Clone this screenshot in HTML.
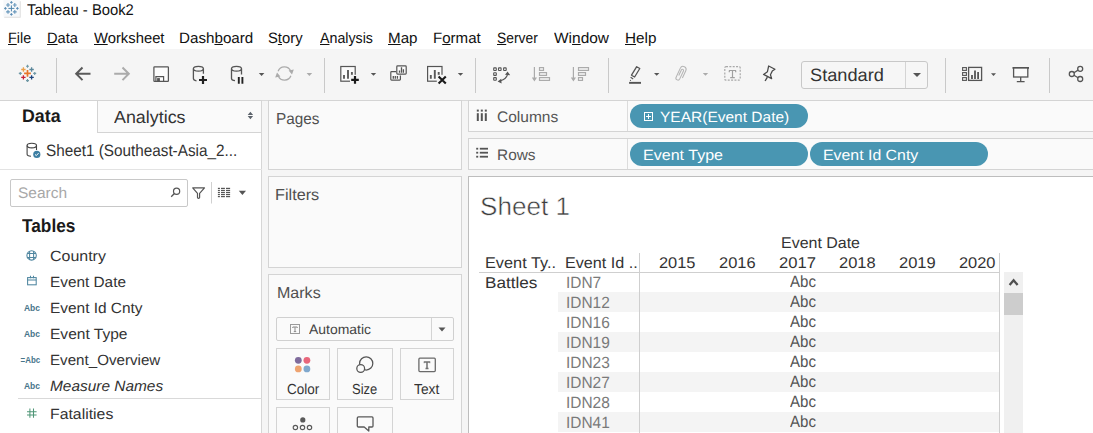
<!DOCTYPE html>
<html><head><meta charset="utf-8"><style>
html,body{margin:0;padding:0;}
body{width:1093px;height:433px;overflow:hidden;position:relative;background:#fff;font-family:"Liberation Sans", sans-serif;}
.a{position:absolute;box-sizing:border-box;}
.t{position:absolute;white-space:nowrap;transform-origin:0 0;text-rendering:geometricPrecision;}
u{text-decoration:underline;text-decoration-thickness:1px;text-underline-offset:1px;}
svg{position:absolute;overflow:visible;}
</style></head><body>
<!-- toolbar -->
<div class="a" style="left:0;top:49px;width:1093px;height:52px;background:#f5f5f5;border-bottom:1px solid #d9d9d9;"></div>
<!-- main bg -->
<div class="a" style="left:0;top:101px;width:1093px;height:332px;background:#f5f5f5;"></div>
<!-- left pane -->
<div class="a" style="left:0;top:100px;width:262px;height:340px;background:#fff;border-top:1px solid #d4d4d4;border-right:1px solid #d6d6d6;"></div>
<div class="a" style="left:97px;top:100px;width:165px;height:33px;background:#fafafa;border:1px solid #d4d4d4;border-right:1px solid #d6d6d6;"></div>
<div class="a" style="left:0;top:169px;width:262px;height:1px;background:#e3e3e3;"></div>
<div class="a" style="left:10px;top:179px;width:178px;height:28px;background:#fff;border:1px solid #c8c8c8;border-radius:2px;"></div>
<div class="a" style="left:18px;top:398px;width:244px;height:1px;background:#d9d9d9;"></div>
<!-- cards -->
<div class="a" style="left:268px;top:100px;width:194px;height:70px;background:#fafafa;border:1px solid #d4d4d4;"></div>
<div class="a" style="left:268px;top:176px;width:194px;height:92px;background:#fafafa;border:1px solid #d4d4d4;"></div>
<div class="a" style="left:268px;top:274px;width:194px;height:170px;background:#fafafa;border:1px solid #d4d4d4;"></div>
<!-- shelves -->
<div class="a" style="left:468px;top:100px;width:640px;height:32px;background:#fafafa;border:1px solid #d4d4d4;"></div>
<div class="a" style="left:468px;top:138px;width:640px;height:32px;background:#fafafa;border:1px solid #d4d4d4;"></div>
<div class="a" style="left:627px;top:101px;width:1px;height:30px;background:#dcdcdc;"></div>
<div class="a" style="left:627px;top:139px;width:1px;height:30px;background:#dcdcdc;"></div>
<!-- view -->
<div class="a" style="left:468px;top:176px;width:640px;height:270px;background:#fff;border-top:1px solid #bdbdbd;border-left:1px solid #bdbdbd;"></div>
<!-- pills -->
<div class="a" style="left:630px;top:104px;width:178px;height:24px;background:#4996b2;border-radius:12px;"></div>
<div class="a" style="left:630px;top:142px;width:178px;height:24px;background:#4996b2;border-radius:12px;"></div>
<div class="a" style="left:810px;top:142px;width:178px;height:24px;background:#4996b2;border-radius:12px;"></div>
<div class="a" style="left:644px;top:112px;width:9px;height:9px;border:1px solid #fff;"></div>
<div class="a" style="left:648px;top:114px;width:1px;height:5px;background:#fff;"></div>
<div class="a" style="left:646px;top:116px;width:5px;height:1px;background:#fff;"></div>
<!-- table stripes -->
<div class="a" style="left:558px;top:292px;width:441px;height:20px;background:#f4f4f4;"></div>
<div class="a" style="left:558px;top:332px;width:441px;height:20px;background:#f4f4f4;"></div>
<div class="a" style="left:558px;top:372px;width:441px;height:20px;background:#f4f4f4;"></div>
<div class="a" style="left:558px;top:412px;width:441px;height:20px;background:#f4f4f4;"></div>
<div class="a" style="left:479px;top:272px;width:520px;height:1px;background:#cfcfcf;"></div>
<div class="a" style="left:639px;top:253px;width:1px;height:180px;background:#cfcfcf;"></div>
<div class="a" style="left:999px;top:253px;width:1px;height:180px;background:#cfcfcf;"></div>
<!-- scrollbar -->
<div class="a" style="left:1004px;top:272px;width:19px;height:161px;background:#f0f0f0;"></div>
<div class="a" style="left:1004px;top:293px;width:19px;height:22px;background:#cdcdcd;"></div>
<svg style="left:0;top:0" width="1093" height="433"><path d="M1009.6 285 L1013.6 280.3 L1017.6 285" fill="none" stroke="#505050" stroke-width="2.3"/></svg>
<!-- Standard dropdown -->
<div class="a" style="left:801px;top:61px;width:127px;height:28px;background:#f6f6f6;border:1px solid #c8c8c8;border-radius:3px;"></div>
<div class="a" style="left:905px;top:62px;width:1px;height:26px;background:#d4d4d4;"></div>
<svg style="left:912px;top:72px" width="10" height="6"><path d="M1 1 L9 1 L5 5 Z" fill="#555"/></svg>
<!-- Automatic dropdown -->
<div class="a" style="left:276px;top:317px;width:178px;height:24px;background:#fafafa;border:1px solid #d0d0d0;border-radius:2px;"></div>
<div class="a" style="left:431px;top:318px;width:1px;height:22px;background:#d4d4d4;"></div>
<svg style="left:438px;top:327px" width="9" height="5"><path d="M0.5 0.5 L7.5 0.5 L4 4.5 Z" fill="#555"/></svg>
<div class="a" style="left:290px;top:324px;width:10px;height:10px;border:1px solid #9a9a9a;"></div>
<svg style="left:290px;top:324px" width="10" height="10"><path d="M2.8 3 H7.2 M5 3 V7.6 M3.8 7.6 H6.2 M2.8 3 V4 M7.2 3 V4" stroke="#8a8a8a" stroke-width="1" fill="none"/></svg>
<!-- Marks buttons -->
<div class="a" style="left:276px;top:348px;width:54px;height:52px;background:#fafafa;border:1px solid #d4d4d4;"></div>
<div class="a" style="left:337px;top:348px;width:56px;height:52px;background:#fafafa;border:1px solid #d4d4d4;"></div>
<div class="a" style="left:400px;top:348px;width:54px;height:52px;background:#fafafa;border:1px solid #d4d4d4;"></div>
<div class="a" style="left:276px;top:407px;width:54px;height:40px;background:#fafafa;border:1px solid #d4d4d4;"></div>
<div class="a" style="left:337px;top:407px;width:56px;height:40px;background:#fafafa;border:1px solid #d4d4d4;"></div>
<svg style="left:0;top:0" width="1093" height="433">
 <circle cx="298.3" cy="360.3" r="3.4" fill="#7f6b9c"/><circle cx="306.9" cy="360.3" r="3.4" fill="#e8667b"/>
 <circle cx="298.3" cy="368.9" r="3.4" fill="#eea370"/><circle cx="306.9" cy="368.9" r="3.4" fill="#80a8cd"/>
</svg>
<svg style="left:0;top:0" width="1093" height="433">
 <circle cx="366.2" cy="363.4" r="6.6" fill="none" stroke="#555" stroke-width="1.25"/>
 <circle cx="360.7" cy="368.5" r="3.9" fill="#fafafa" stroke="#555" stroke-width="1.25"/>
</svg>
<svg style="left:0;top:0" width="1093" height="433">
 <rect x="418.9" y="358.2" width="16.4" height="13.4" rx="1" fill="none" stroke="#6a6a6a" stroke-width="1.3"/>
 <path d="M424.2 361.9 H429.8 M427 361.9 V368.3 M425.5 368.6 H428.5" stroke="#707070" stroke-width="1.5" fill="none"/>
 <path d="M424.2 361.4 V363.2 M429.8 361.4 V363.2" stroke="#707070" stroke-width="0.9" fill="none"/>
</svg>
<svg style="left:0;top:0" width="1093" height="433">
 <circle cx="302.8" cy="419.9" r="2.6" fill="#5a5a5a"/>
 <circle cx="295.4" cy="427.5" r="2.2" fill="none" stroke="#5a5a5a" stroke-width="1.15"/>
 <circle cx="302.5" cy="427.5" r="2.2" fill="none" stroke="#5a5a5a" stroke-width="1.15"/>
 <circle cx="309.5" cy="427.5" r="2.2" fill="none" stroke="#5a5a5a" stroke-width="1.15"/>
 <path d="M358.5 416.9 H372 Q373 416.9 373 417.9 V426 Q373 427 372 427 H368.8 V431 L364.2 427 H358.5 Q357.3 427 357.3 426 V417.9 Q357.3 416.9 358.5 416.9 Z" fill="none" stroke="#5a5a5a" stroke-width="1.3" stroke-linejoin="round"/>
</svg>
<svg style="left:0;top:0" width="1093" height="433" viewBox="0 0 1093 433">
<!-- window icon -->
<rect x="4.2" y="1.2" width="16.5" height="16.5" fill="#dcdcdc"/>
<rect x="3.5" y="0" width="16.3" height="16.8" fill="#f6f8fa"/>
<g fill="none">
<path d="M11.4 5.4 V11.4 M8.4 8.4 H14.4" stroke="#4f84ac" stroke-width="1.0"/>
<path d="M8 3.1 V6.9 M6.1 5 H9.9" stroke="#6696bb" stroke-width="1.1"/>
<path d="M14.8 3.1 V6.9 M12.9 5 H16.7" stroke="#6696bb" stroke-width="1.1"/>
<path d="M8 10.0 V13.8 M6.1 11.9 H9.9" stroke="#6696bb" stroke-width="1.1"/>
<path d="M14.8 10.0 V13.8 M12.9 11.9 H16.7" stroke="#6696bb" stroke-width="1.1"/>
<path d="M11.4 1.0999999999999999 V3.7 M10.1 2.4 H12.700000000000001" stroke="#5a8db5" stroke-width="1.0"/>
<path d="M11.4 13.1 V15.700000000000001 M10.1 14.4 H12.700000000000001" stroke="#5a8db5" stroke-width="1.0"/>
<path d="M5.4 7.1000000000000005 V9.700000000000001 M4.1000000000000005 8.4 H6.7" stroke="#5a8db5" stroke-width="1.0"/>
<path d="M17.4 7.1000000000000005 V9.700000000000001 M16.099999999999998 8.4 H18.7" stroke="#5a8db5" stroke-width="1.0"/>
</g>
<!-- toolbar separators -->
<g fill="#c9c9c9">
 <rect x="56" y="58" width="1" height="35"/><rect x="324" y="58" width="1" height="35"/>
 <rect x="475" y="58" width="1" height="35"/><rect x="608" y="58" width="1" height="35"/>
 <rect x="945" y="58" width="1" height="35"/><rect x="1049" y="58" width="1" height="35"/>
</g>
<!-- tableau logo -->
<g fill="none">
<path d="M27.5 70.0 V76.80000000000001 M24.1 73.4 H30.9" stroke="#e8762b" stroke-width="1.7"/>
<path d="M23.4 67.3 V71.7 M21.2 69.5 H25.599999999999998" stroke="#eba04a" stroke-width="1.3"/>
<path d="M31.6 67.3 V71.7 M29.400000000000002 69.5 H33.800000000000004" stroke="#5b879b" stroke-width="1.3"/>
<path d="M23.4 75.2 V79.60000000000001 M21.2 77.4 H25.599999999999998" stroke="#c72037" stroke-width="1.3"/>
<path d="M31.6 75.2 V79.60000000000001 M29.400000000000002 77.4 H33.800000000000004" stroke="#1f457e" stroke-width="1.3"/>
<path d="M27.5 64.7 V67.7 M26.0 66.2 H29.0" stroke="#7099a6" stroke-width="1.1"/>
<path d="M27.5 79.1 V82.1 M26.0 80.6 H29.0" stroke="#7099a6" stroke-width="1.1"/>
<path d="M20.3 71.9 V74.9 M18.8 73.4 H21.8" stroke="#7099a6" stroke-width="1.1"/>
<path d="M34.7 71.9 V74.9 M33.2 73.4 H36.2" stroke="#7099a6" stroke-width="1.1"/>
</g>
<!-- back / forward -->
<path d="M90.5 73.8 H76.5 M82.5 67.5 L76.2 73.8 L82.5 80.1" fill="none" stroke="#5a5a5a" stroke-width="2"/>
<path d="M114.2 73.8 H128.5 M122.5 67.5 L128.8 73.8 L122.5 80.1" fill="none" stroke="#ababab" stroke-width="2"/>
<!-- save -->
<rect x="153.9" y="66.8" width="14.5" height="14.5" fill="#fcfcfc" stroke="#555" stroke-width="1.25" rx="0.6"/>
<path d="M155.9 81.5 V76.7 H163.6 V81.5" fill="none" stroke="#555" stroke-width="1.2"/>
<rect x="157.1" y="78.1" width="2.8" height="3.4" fill="#555"/>
<!-- new datasource -->
<g fill="none" stroke="#555" stroke-width="1.3">
 <ellipse cx="198.4" cy="68.8" rx="5" ry="2.4"/>
 <path d="M193.4 68.8 V78.6 Q193.4 80.4 196.5 80.8 M203.4 68.8 V73.8"/>
</g>
<path d="M203 76 V84 M199 80 H207" stroke="#222" stroke-width="2.2"/>
<!-- pause datasource -->
<g fill="none" stroke="#555" stroke-width="1.3">
 <ellipse cx="236.5" cy="68.8" rx="5" ry="2.4"/>
 <path d="M231.5 68.8 V78.6 Q231.5 80.4 235 80.7 M241.5 68.8 V74.5"/>
</g>
<path d="M238.8 77 V83.8 M242.4 77 V83.8" stroke="#222" stroke-width="1.9"/>
<path d="M258.8 73 H264.4 L261.6 76 Z" fill="#555"/>
<!-- refresh -->
<g fill="none" stroke="#ababab" stroke-width="1.3">
 <path d="M278.1 71.2 A6.8 6.8 0 0 1 290.6 70.8"/>
 <path d="M290.9 75.8 A6.8 6.8 0 0 1 278.4 76.2"/>
</g>
<path d="M288.6 70.6 L293.8 69.6 L292 74.6 Z M280.4 76.4 L275.2 77.4 L277 72.4 Z" fill="#ababab"/>
<path d="M306.6 73 H312.2 L309.4 76 Z" fill="#ababab"/>
<!-- new worksheet -->
<rect x="340.8" y="66.5" width="14.4" height="14.7" fill="#fafafa" stroke="#555" stroke-width="1.2"/>
<path d="M344 78.7 V75.1 M348 78.7 V70.1 M351.9 77.7 V72.1" stroke="#5a5a5a" stroke-width="1.9"/>
<rect x="350" y="74.8" width="9.5" height="9.5" fill="#f4f4f4"/>
<path d="M355 76.1 V83.7 M351.2 79.9 H358.8" stroke="#1a1a1a" stroke-width="2.2"/>
<path d="M370.8 73 H376.2 L373.5 75.8 Z" fill="#555"/>
<!-- duplicate -->
<rect x="390.8" y="71.6" width="9.6" height="8.5" fill="#fafafa" stroke="#555" stroke-width="1.2" rx="0.8"/>
<path d="M393.3 78.8 V76.1 M395.3 78.8 V76.1 M397.4 78.8 V76.1" stroke="#555" stroke-width="1.3"/>
<rect x="396.1" y="64.6" width="11.4" height="10.9" fill="#f4f4f4"/>
<rect x="396.8" y="65.9" width="9.4" height="8.2" fill="#fafafa" stroke="#555" stroke-width="1.2" rx="0.8"/>
<path d="M399.5 72.8 V70.4 M401.5 72.8 V67.3 M403.4 72.8 V69.2" stroke="#555" stroke-width="1.3"/>
<!-- clear sheet -->
<rect x="427.6" y="66.5" width="14.4" height="14.7" fill="#fafafa" stroke="#555" stroke-width="1.2"/>
<path d="M430.8 78.7 V75.1 M434.8 78.7 V70.1 M438.7 77.7 V72.1" stroke="#5a5a5a" stroke-width="1.9"/>
<rect x="436.8" y="74.8" width="10" height="10" fill="#f4f4f4"/>
<path d="M438.6 76.4 L445.8 83.4 M445.8 76.4 L438.6 83.4" stroke="#1a1a1a" stroke-width="2.1"/>
<path d="M457.8 73 H463.2 L460.5 75.8 Z" fill="#555"/>
<!-- swap -->
<g fill="none" stroke="#555" stroke-width="1.1">
 <rect x="493.7" y="67.9" width="2.6" height="2.6" rx="0.5"/><rect x="498.5" y="67.9" width="2.6" height="2.6" rx="0.5"/><rect x="503.6" y="67.9" width="2.6" height="2.6" rx="0.5"/>
 <rect x="493.7" y="72.8" width="2.6" height="2.6" rx="0.5"/><rect x="493.7" y="77.6" width="2.6" height="2.6" rx="0.5"/>
 <path d="M500.5 80.8 Q506 79.2 507.6 74.5"/>
</g>
<path d="M507.6 71.4 L510.2 75.2 L505 74.8 Z M497.6 81.4 L501.2 78.8 L501.6 83.6 Z" fill="#555"/>
<!-- sort asc -->
<g stroke="#ababab" fill="none" stroke-width="1.2">
 <path d="M534.4 67 V80"/>
 <rect x="539.5" y="67.6" width="4" height="2.8"/><rect x="539.5" y="72.6" width="7" height="2.8"/><rect x="539.5" y="77.6" width="10" height="2.8"/>
 <path d="M573.4 67 V80"/>
 <rect x="578.5" y="67.6" width="10" height="2.8"/><rect x="578.5" y="72.6" width="7" height="2.8"/><rect x="578.5" y="77.6" width="4" height="2.8"/>
</g>
<path d="M531.8 77.5 H537 L534.4 81.5 Z M570.8 77.5 H576 L573.4 81.5 Z" fill="#ababab"/>
<!-- highlight pen -->
<path d="M636.7 66.7 L639.8 68.5 L634.6 77 L631.5 75.2 Z" fill="none" stroke="#555" stroke-width="1.3" stroke-linejoin="round"/>
<path d="M630.6 77.3 L633.2 78.9" stroke="#555" stroke-width="1.2" fill="none"/>
<circle cx="630.5" cy="80.3" r="0.6" fill="#555"/>
<rect x="629.1" y="81.9" width="11.9" height="1.9" fill="#555"/>
<path d="M654 73 H659.4 L656.7 75.8 Z" fill="#555"/>
<!-- paperclip -->
<g transform="translate(681.2 73.4) rotate(25)">
<path d="M-1.3 3 V-3.2 A1.15 1.15 0 0 1 1 -3.2 V5.6 A2 2 0 0 1 -3 5.6 V-4.4 A3 3 0 0 1 3 -4.4 V3.6" fill="none" stroke="#b5b5b5" stroke-width="1.05"/>
</g>
<path d="M702.8 73 H708.2 L705.5 75.8 Z" fill="#ababab"/>
<!-- T dashed -->
<rect x="724.8" y="66.6" width="15.4" height="13.6" rx="1.2" fill="none" stroke="#a8a8a8" stroke-width="1.2" stroke-dasharray="2 1.35"/>
<path d="M729 70.5 H736 M732.5 70.5 V77.7 M730.2 77.7 H734.8 M729.3 70.5 V72.2 M735.7 70.5 V72.2" stroke="#a0a0a0" stroke-width="1.2" fill="none"/>
<!-- pin -->
<path d="M768.65 66 L774.95 69.3 L772.25 71.1 L770.45 74.7 L771.65 78.6 L763.55 74.4 L767.45 71.7 Z" fill="none" stroke="#4a4a4a" stroke-width="1.25" stroke-linejoin="round"/>
<path d="M767.4 77.1 L765.1 81" stroke="#4a4a4a" stroke-width="1.4" fill="none"/>
<!-- show me -->
<g fill="none" stroke="#555" stroke-width="1.1">
 <rect x="962.6" y="67.6" width="3.8" height="2.8"/><rect x="962.6" y="72.6" width="3.8" height="2.8"/><rect x="962.6" y="77.6" width="3.8" height="2.8"/>
 <rect x="968.6" y="67.4" width="13" height="13" stroke-width="1.3"/>
</g>
<path d="M972 79 V75 M975 79 V70.5 M978.1 79 V72" stroke="#555" stroke-width="1.8"/>
<path d="M991 73.3 H996 L993.5 76 Z" fill="#555"/>
<!-- presentation -->
<rect x="1012.5" y="67" width="16.5" height="1.8" fill="#555"/>
<rect x="1013.6" y="68" width="14.2" height="9" fill="#fafafa" stroke="#555" stroke-width="1.3"/>
<path d="M1020.7 77 V81.6 M1016.8 81.6 H1024.6" stroke="#555" stroke-width="1.3" fill="none"/>
<!-- share -->
<g fill="none" stroke="#555" stroke-width="1.3">
 <circle cx="1071.8" cy="74" r="2.5"/><circle cx="1080.2" cy="68.8" r="2.5"/><circle cx="1080.2" cy="79" r="2.5"/>
 <path d="M1073.9 72.7 L1078.1 70.1 M1073.9 75.3 L1078.1 77.7"/>
</g>

<!-- left pane icons -->
<path d="M247.7 115 L250.4 111.8 L253.1 115 Z M247.7 116 L253.1 116 L250.4 119.2 Z" fill="#5c636b"/>
<g fill="none" stroke="#444" stroke-width="1.1">
 <ellipse cx="31.8" cy="145.6" rx="4.7" ry="2.3"/>
 <path d="M27.1 145.6 V154.3 Q27.1 156.1 31 156.2 M36.5 145.6 V150"/>
</g>
<circle cx="36.8" cy="154.4" r="3.6" fill="#3d7fa3"/>
<path d="M35 154.4 L36.3 155.6 L38.6 153.1" stroke="#fff" stroke-width="1" fill="none"/>
<!-- magnifier -->
<circle cx="176.6" cy="191.3" r="3.1" fill="none" stroke="#555" stroke-width="1.2"/>
<path d="M174.4 193.5 L171.2 196.7" stroke="#555" stroke-width="1.3"/>
<!-- funnel -->
<path d="M192.7 187.9 H204.5 L199.6 193.3 V197.6 Q199.6 198.3 198.55 198.3 Q197.5 198.3 197.5 197.6 V193.3 Z" fill="none" stroke="#555" stroke-width="1.2" stroke-linejoin="round"/>
<rect x="211" y="182" width="1" height="21.5" fill="#d0d0d0"/>
<!-- list icon -->
<g fill="#555">
 <rect x="217.9" y="187.80" width="2" height="1.2"/><rect x="221" y="187.80" width="3.9" height="1.2"/><rect x="226" y="187.80" width="4.1" height="1.2"/>
 <rect x="217.9" y="189.85" width="2" height="1.2"/><rect x="221" y="189.85" width="3.9" height="1.2"/><rect x="226" y="189.85" width="4.1" height="1.2"/>
 <rect x="217.9" y="191.90" width="2" height="1.2"/><rect x="221" y="191.90" width="3.9" height="1.2"/><rect x="226" y="191.90" width="4.1" height="1.2"/>
 <rect x="217.9" y="193.95" width="2" height="1.2"/><rect x="221" y="193.95" width="3.9" height="1.2"/><rect x="226" y="193.95" width="4.1" height="1.2"/>
 <rect x="217.9" y="196.00" width="2" height="1.2"/><rect x="221" y="196.00" width="3.9" height="1.2"/><rect x="226" y="196.00" width="4.1" height="1.2"/>
</g>
<path d="M238.8 190.8 H246 L242.4 195 Z" fill="#555"/>
<!-- field icons -->
<g fill="none" stroke="#4f86a0" stroke-width="1.05">
 <circle cx="31.6" cy="255.4" r="4.7"/>
 <path d="M29.6 251 V259.8 M33.6 251 V259.8 M27.2 253.4 H36 M27.2 257.4 H36"/>
 <rect x="27.6" y="277.6" width="8.6" height="7.2"/>
 <path d="M27.6 279.9 H36.2 M30.5 275.8 V278.3 M33.5 275.8 V278.3"/>
</g>
<g fill="#47748a" font-family="Liberation Sans" font-weight="700" font-size="9.2px">
 <text x="24" y="311" textLength="16" lengthAdjust="spacingAndGlyphs">Abc</text>
 <text x="24" y="337" textLength="16" lengthAdjust="spacingAndGlyphs">Abc</text>
 <text x="20.6" y="363" textLength="19.6" lengthAdjust="spacingAndGlyphs">=Abc</text>
 <text x="24" y="389" textLength="16" lengthAdjust="spacingAndGlyphs">Abc</text>
</g>
<path d="M29.9 408.4 V417.7 M33.5 408.4 V417.7 M27 411.8 H36.6 M27 414.9 H36.6" stroke="#4f9677" stroke-width="1.05" fill="none"/>
<!-- shelf icons -->
<g fill="#555">
 <rect x="476.8" y="109.6" width="2" height="2"/><rect x="480.8" y="109.6" width="2" height="2"/><rect x="484.8" y="109.6" width="2" height="2"/>
 <rect x="476.8" y="113.2" width="2" height="7.8"/><rect x="480.8" y="113.2" width="2" height="7.8"/><rect x="484.8" y="113.2" width="2" height="7.8"/>
 <rect x="476.2" y="147.8" width="2" height="1.8"/><rect x="479.8" y="147.8" width="8.2" height="1.8"/>
 <rect x="476.2" y="151.8" width="2" height="1.8"/><rect x="479.8" y="151.8" width="8.2" height="1.8"/>
 <rect x="476.2" y="155.8" width="2" height="1.8"/><rect x="479.8" y="155.8" width="8.2" height="1.8"/>
</g>
</svg>

<div class="t" style="left:27.00px;top:2.73px;font-size:15.55px;line-height:15.55px;color:#111;transform:scaleX(0.9504);">Tableau - Book2</div>
<div class="t" style="left:8.00px;top:31.62px;font-size:14.97px;line-height:14.97px;color:#111;transform:scaleX(0.9572);"><u>F</u>ile</div>
<div class="t" style="left:47.00px;top:31.62px;font-size:14.97px;line-height:14.97px;color:#111;transform:scaleX(0.9780);"><u>D</u>ata</div>
<div class="t" style="left:94.00px;top:31.62px;font-size:14.97px;line-height:14.97px;color:#111;transform:scaleX(0.9890);"><u>W</u>orksheet</div>
<div class="t" style="left:179.00px;top:31.62px;font-size:14.97px;line-height:14.97px;color:#111;transform:scaleX(1.0139);">Dash<u>b</u>oard</div>
<div class="t" style="left:268.00px;top:31.62px;font-size:14.97px;line-height:14.97px;color:#111;transform:scaleX(0.9882);">S<u>t</u>ory</div>
<div class="t" style="left:320.00px;top:31.62px;font-size:14.97px;line-height:14.97px;color:#111;transform:scaleX(0.9491);"><u>A</u>nalysis</div>
<div class="t" style="left:388.00px;top:31.62px;font-size:14.97px;line-height:14.97px;color:#111;transform:scaleX(1.0131);"><u>M</u>ap</div>
<div class="t" style="left:433.00px;top:31.62px;font-size:14.97px;line-height:14.97px;color:#111;transform:scaleX(1.0066);">F<u>o</u>rmat</div>
<div class="t" style="left:497.00px;top:31.62px;font-size:14.97px;line-height:14.97px;color:#111;transform:scaleX(0.9262);"><u>S</u>erver</div>
<div class="t" style="left:554.00px;top:31.62px;font-size:14.97px;line-height:14.97px;color:#111;transform:scaleX(1.0332);">Wi<u>n</u>dow</div>
<div class="t" style="left:625.00px;top:31.62px;font-size:14.97px;line-height:14.97px;color:#111;transform:scaleX(1.0207);"><u>H</u>elp</div>
<div class="t" style="left:810.00px;top:66.86px;font-size:17.88px;line-height:17.88px;color:#333;transform:scaleX(1.0183);">Standard</div>
<div class="t" style="left:22.00px;top:106.53px;font-size:18.02px;line-height:18.02px;color:#1a1a1a;font-weight:700;transform:scaleX(0.9877);">Data</div>
<div class="t" style="left:114.00px;top:109.03px;font-size:17.44px;line-height:17.44px;color:#333;transform:scaleX(1.0246);">Analytics</div>
<div class="t" style="left:46.00px;top:143.09px;font-size:16.42px;line-height:16.42px;color:#333;transform:scaleX(0.9317);">Sheet1 (Southeast-Asia_2...</div>
<div class="t" style="left:18.00px;top:185.87px;font-size:15.26px;line-height:15.26px;color:#a8a8a8;transform:scaleX(1.0166);">Search</div>
<div class="t" style="left:22.00px;top:217.04px;font-size:18.60px;line-height:18.60px;color:#1a1a1a;font-weight:700;transform:scaleX(0.9278);">Tables</div>
<div class="t" style="left:50.00px;top:250.44px;font-size:14.83px;line-height:14.83px;color:#333;transform:scaleX(1.0760);">Country</div>
<div class="t" style="left:50.00px;top:276.24px;font-size:14.83px;line-height:14.83px;color:#333;transform:scaleX(1.0351);">Event Date</div>
<div class="t" style="left:50.00px;top:301.54px;font-size:14.83px;line-height:14.83px;color:#333;transform:scaleX(1.0399);">Event Id Cnty</div>
<div class="t" style="left:50.00px;top:328.44px;font-size:14.83px;line-height:14.83px;color:#333;transform:scaleX(1.0485);">Event Type</div>
<div class="t" style="left:50.00px;top:354.24px;font-size:14.83px;line-height:14.83px;color:#333;transform:scaleX(1.0218);">Event_Overview</div>
<div class="t" style="left:50.00px;top:380.14px;font-size:14.83px;line-height:14.83px;color:#333;font-style:italic;transform:scaleX(1.0400);">Measure Names</div>
<div class="t" style="left:50.00px;top:408.24px;font-size:14.83px;line-height:14.83px;color:#333;transform:scaleX(1.0666);">Fatalities</div>
<div class="t" style="left:276.00px;top:112.48px;font-size:15.84px;line-height:15.84px;color:#505050;transform:scaleX(0.9674);">Pages</div>
<div class="t" style="left:275.00px;top:188.48px;font-size:15.84px;line-height:15.84px;color:#505050;transform:scaleX(1.0266);">Filters</div>
<div class="t" style="left:277.00px;top:285.78px;font-size:15.84px;line-height:15.84px;color:#505050;transform:scaleX(1.0129);">Marks</div>
<div class="t" style="left:309.00px;top:322.53px;font-size:13.66px;line-height:13.66px;color:#444;transform:scaleX(1.0201);">Automatic</div>
<div class="t" style="left:287.00px;top:383.09px;font-size:14.53px;line-height:14.53px;color:#333;transform:scaleX(0.9285);">Color</div>
<div class="t" style="left:352.00px;top:383.09px;font-size:14.53px;line-height:14.53px;color:#333;transform:scaleX(0.8941);">Size</div>
<div class="t" style="left:414.00px;top:383.09px;font-size:14.53px;line-height:14.53px;color:#333;transform:scaleX(0.9501);">Text</div>
<div class="t" style="left:497.00px;top:109.87px;font-size:15.26px;line-height:15.26px;color:#555;transform:scaleX(1.0180);">Columns</div>
<div class="t" style="left:497.00px;top:147.87px;font-size:15.26px;line-height:15.26px;color:#555;transform:scaleX(1.0110);">Rows</div>
<div class="t" style="left:660.00px;top:111.24px;font-size:14.83px;line-height:14.83px;color:#fff;transform:scaleX(1.0455);">YEAR(Event Date)</div>
<div class="t" style="left:643.00px;top:149.04px;font-size:14.83px;line-height:14.83px;color:#fff;transform:scaleX(1.0830);">Event Type</div>
<div class="t" style="left:823.00px;top:149.04px;font-size:14.83px;line-height:14.83px;color:#fff;transform:scaleX(1.0700);">Event Id Cnty</div>
<div class="t" style="left:480.00px;top:194.93px;font-size:25.58px;line-height:25.58px;color:#3d3d3d;transform:scaleX(1.0196);-webkit-text-stroke:0.5px #fff;">Sheet 1</div>
<div class="t" style="left:781.00px;top:236.43px;font-size:15.55px;line-height:15.55px;color:#333;transform:scaleX(1.0270);">Event Date</div>
<div class="t" style="left:485.00px;top:255.73px;font-size:15.55px;line-height:15.55px;color:#333;transform:scaleX(1.0480);">Event Ty..</div>
<div class="t" style="left:565.00px;top:255.73px;font-size:15.55px;line-height:15.55px;color:#333;transform:scaleX(1.0401);">Event Id ..</div>
<div class="t" style="left:659.00px;top:255.73px;font-size:15.55px;line-height:15.55px;color:#333;transform:scaleX(1.0547);">2015</div>
<div class="t" style="left:719.00px;top:255.73px;font-size:15.55px;line-height:15.55px;color:#333;transform:scaleX(1.0571);">2016</div>
<div class="t" style="left:779.00px;top:255.73px;font-size:15.55px;line-height:15.55px;color:#333;transform:scaleX(1.0660);">2017</div>
<div class="t" style="left:839.00px;top:255.73px;font-size:15.55px;line-height:15.55px;color:#333;transform:scaleX(1.0583);">2018</div>
<div class="t" style="left:899.00px;top:255.73px;font-size:15.55px;line-height:15.55px;color:#333;transform:scaleX(1.0601);">2019</div>
<div class="t" style="left:959.00px;top:255.73px;font-size:15.55px;line-height:15.55px;color:#333;transform:scaleX(1.0545);">2020</div>
<div class="t" style="left:485.00px;top:275.60px;font-size:15.70px;line-height:15.70px;color:#333;transform:scaleX(1.0924);">Battles</div>
<div class="t" style="left:566.00px;top:274.81px;font-size:16.28px;line-height:16.28px;color:#7a7a7a;transform:scaleX(0.9500);">IDN7</div>
<div class="t" style="left:790.00px;top:273.51px;font-size:16.28px;line-height:16.28px;color:#555;transform:scaleX(0.9253);">Abc</div>
<div class="t" style="left:566.00px;top:294.81px;font-size:16.28px;line-height:16.28px;color:#7a7a7a;transform:scaleX(0.9500);">IDN12</div>
<div class="t" style="left:790.00px;top:293.51px;font-size:16.28px;line-height:16.28px;color:#555;transform:scaleX(0.9253);">Abc</div>
<div class="t" style="left:566.00px;top:314.81px;font-size:16.28px;line-height:16.28px;color:#7a7a7a;transform:scaleX(0.9500);">IDN16</div>
<div class="t" style="left:790.00px;top:313.51px;font-size:16.28px;line-height:16.28px;color:#555;transform:scaleX(0.9253);">Abc</div>
<div class="t" style="left:566.00px;top:334.81px;font-size:16.28px;line-height:16.28px;color:#7a7a7a;transform:scaleX(0.9500);">IDN19</div>
<div class="t" style="left:790.00px;top:333.51px;font-size:16.28px;line-height:16.28px;color:#555;transform:scaleX(0.9253);">Abc</div>
<div class="t" style="left:566.00px;top:354.81px;font-size:16.28px;line-height:16.28px;color:#7a7a7a;transform:scaleX(0.9500);">IDN23</div>
<div class="t" style="left:790.00px;top:353.51px;font-size:16.28px;line-height:16.28px;color:#555;transform:scaleX(0.9253);">Abc</div>
<div class="t" style="left:566.00px;top:374.81px;font-size:16.28px;line-height:16.28px;color:#7a7a7a;transform:scaleX(0.9500);">IDN27</div>
<div class="t" style="left:790.00px;top:373.51px;font-size:16.28px;line-height:16.28px;color:#555;transform:scaleX(0.9253);">Abc</div>
<div class="t" style="left:566.00px;top:394.81px;font-size:16.28px;line-height:16.28px;color:#7a7a7a;transform:scaleX(0.9500);">IDN28</div>
<div class="t" style="left:790.00px;top:393.51px;font-size:16.28px;line-height:16.28px;color:#555;transform:scaleX(0.9253);">Abc</div>
<div class="t" style="left:566.00px;top:414.81px;font-size:16.28px;line-height:16.28px;color:#7a7a7a;transform:scaleX(0.9500);">IDN41</div>
<div class="t" style="left:790.00px;top:413.51px;font-size:16.28px;line-height:16.28px;color:#555;transform:scaleX(0.9253);">Abc</div>
</body></html>
